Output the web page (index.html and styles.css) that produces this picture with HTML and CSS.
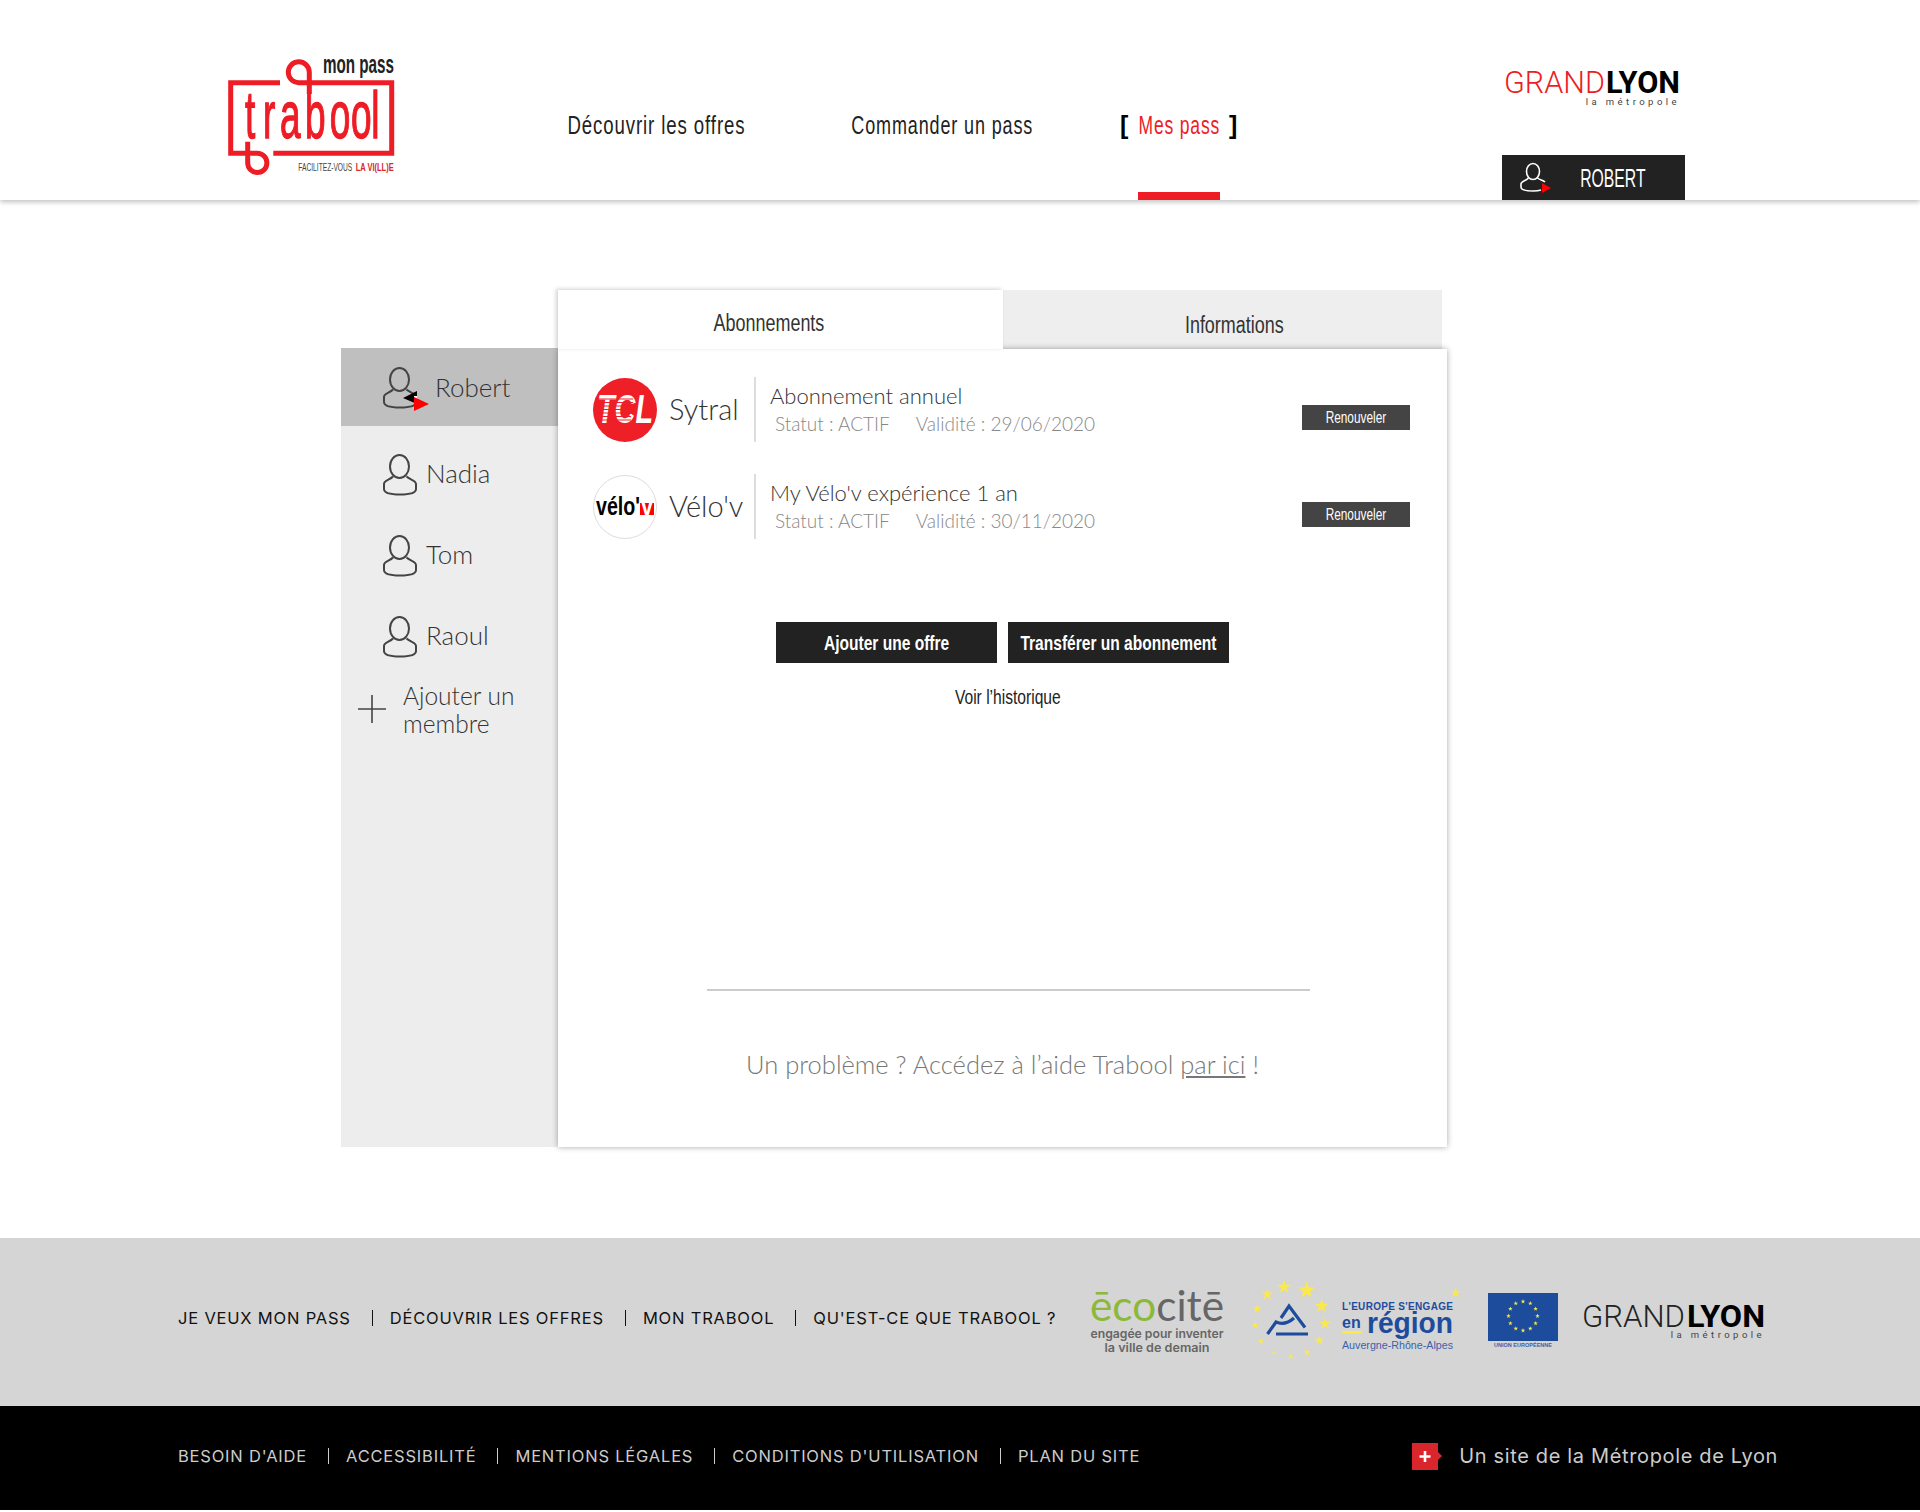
FILE: index.html
```html
<!DOCTYPE html>
<html lang="fr">
	<head>
		<meta charset="UTF-8">
		<title>Trabool - Mes pass</title>
		<link rel="stylesheet" href="styles.css">
	</head>
	<body>

		<svg class="defs" width="0" height="0">
			<defs>
				<polygon id="star" points="0,-1 .225,-.31 .95,-.31 .36,.12 .59,.81 0,.38 -.59,.81 -.36,.12 -.95,-.31 -.225,-.31"/>
				<g id="person" fill="none" stroke="#444" stroke-width="2">
					<ellipse cx="17.5" cy="12.5" rx="9.5" ry="11.5"/>
					<path d="M11 22.5 C8 26 2 26 2 30 V35 C2 39 10 40.5 18 40.5 C26 40.5 34 39 34 35 V30 C34 26 28 26 24.5 22.5"/>
				</g>
			</defs>
		</svg>

		<!--header-->
		<header class="top">
			<svg class="logo" width="180" height="130" viewBox="0 0 180 130">
				<g fill="none" stroke="#ee1c25" stroke-width="5">
					<path d="M60 32.7 H10.7 V103.3 H37.3 A9.6 9.6 0 1 1 27.7 113 V91.7"/>
					<path d="M53.3 103.3 H171.7 V32.7 H80 A10.5 10.5 0 1 1 89.3 22 V44"/>
				</g>
				<text class="logo-word" transform="scale(.56 1)" x="44.600 76.800 107 152 196 234 270" y="88">trabool</text>
				<text class="logo-pass" x="103" y="23" textLength="71" lengthAdjust="spacingAndGlyphs">mon pass</text>
				<text class="logo-sub" x="78.300" y="121" textLength="54" lengthAdjust="spacingAndGlyphs">FACILITEZ-VOUS</text>
				<text class="logo-sub logo-sub-red" x="135.700" y="121" textLength="38" lengthAdjust="spacingAndGlyphs">LA VI(LL)E</text>
			</svg>
			<nav class="nav">
				<a href="#" class="nav-item nav-w1"><span class="cond cond-nav">Découvrir les offres</span></a>
				<a href="#" class="nav-item nav-w2"><span class="cond cond-nav2">Commander un pass</span></a>
				<a href="#" class="nav-item nav-on">
					<span class="br">[</span>
					<span class="nav-label"><span class="cond cond-on">Mes pass</span></span>
					<span class="br">]</span>
				</a>
			</nav>
			<div class="top-right">
				<svg class="gl" width="183" height="42" viewBox="0 0 183 42">
					<text class="gl-light gl-red" x="2" y="27" textLength="101" lengthAdjust="spacingAndGlyphs">GRAND</text>
					<text class="gl-bold" x="104" y="27" textLength="74" lengthAdjust="spacingAndGlyphs">LYON</text>
					<text class="gl-sub" x="178" y="39" text-anchor="end">la métropole</text>
				</svg>
				<a href="#" class="me">
					<svg width="36" height="32" viewBox="0 0 36 32">
						<g fill="none" stroke="#fff" stroke-width="1.6">
							<ellipse cx="13" cy="9.500" rx="6.500" ry="8"/>
							<path d="M8.500 16 C6 19 1 19 1 22 V25 C1 28 7 29 13 29 C16 29 19 28.700 21 28 M25 20 C23 18 20 18 17.500 16"/>
						</g>
						<polygon points="22,21 31,26 22,31" fill="#f00"/>
					</svg>
					<span class="me-name"><span class="cond cond-me">ROBERT</span></span>
				</a>
			</div>
		</header>

		<main class="main">
			<!--membres-->
			<aside class="side">
				<a href="#" class="member member-on">
					<svg class="person" width="48" height="44" viewBox="0 0 48 44">
						<use href="#person"/>
						<polygon points="21,31 35,24 35,37" fill="#000"/>
						<rect x="32" y="29" width="3" height="10" fill="#fff"/>
						<polygon points="32,30 47,37 32,44" fill="#f00"/>
					</svg>
					<span>Robert</span>
				</a>
				<a href="#" class="member">
					<svg class="person" width="36" height="42" viewBox="0 0 36 42"><use href="#person"/></svg>
					<span>Nadia</span>
				</a>
				<a href="#" class="member">
					<svg class="person" width="36" height="42" viewBox="0 0 36 42"><use href="#person"/></svg>
					<span>Tom</span>
				</a>
				<a href="#" class="member">
					<svg class="person" width="36" height="42" viewBox="0 0 36 42"><use href="#person"/></svg>
					<span>Raoul</span>
				</a>
				<a href="#" class="add">
					<svg width="28" height="28" viewBox="0 0 28 28"><path d="M0 14 H28 M14 0 V28" stroke="#444" stroke-width="1.6" fill="none"/></svg>
					<span>Ajouter un<br>membre</span>
				</a>
			</aside>

			<section class="card">
				<div class="tabs">
					<a href="#" class="tab tab-on"><span class="cond cond-tab">Abonnements</span></a>
					<a href="#" class="tab"><span class="cond cond-tab">Informations</span></a>
				</div>
				<div class="panel">
					<div class="row">
						<svg class="badge" width="64" height="64" viewBox="0 0 64 64">
							<circle cx="32" cy="32" r="32" fill="#ee1f27"/>
							<text class="tcl" x="4" y="45" textLength="56" lengthAdjust="spacingAndGlyphs">TCL</text>
							<path d="M2 21 H40 M2 24.500 H40 M2 28 H40 M2 31.500 H40 M2 35 H40 M2 38.500 H38 M2 42 H38" stroke="#ee1f27" stroke-width="1.200"/>
						</svg>
						<div class="brand">Sytral</div>
						<div class="info">
							<div class="info-title">Abonnement annuel</div>
							<div class="info-meta"><span>Statut : ACTIF</span><span>Validité : 29/06/2020</span></div>
						</div>
						<a href="#" class="renew"><span class="cond cond-renew">Renouveler</span></a>
					</div>
					<div class="row">
						<svg class="badge" width="64" height="64" viewBox="0 0 64 64">
							<circle cx="32" cy="32" r="31.500" fill="#fff" stroke="#ddd"/>
							<text class="velo" x="3" y="40" textLength="44" lengthAdjust="spacingAndGlyphs">vélo'</text>
							<rect x="47" y="28" width="14" height="12" fill="#f00"/>
							<text class="velo velo-v" x="48" y="40" textLength="12" lengthAdjust="spacingAndGlyphs">v</text>
						</svg>
						<div class="brand">Vélo'v</div>
						<div class="info">
							<div class="info-title">My Vélo'v expérience 1 an</div>
							<div class="info-meta"><span>Statut : ACTIF</span><span>Validité : 30/11/2020</span></div>
						</div>
						<a href="#" class="renew"><span class="cond cond-renew">Renouveler</span></a>
					</div>

					<div class="actions">
						<a href="#" class="btn"><span class="cond cond-btn">Ajouter une offre</span></a>
						<a href="#" class="btn"><span class="cond cond-btn">Transférer un abonnement</span></a>
					</div>
					<a href="#" class="history"><span class="cond cond-hist">Voir l’historique</span></a>
					<div class="rule"></div>
					<p class="help">Un problème ? Accédez à l’aide Trabool <a href="#">par ici</a> !</p>
				</div>
			</section>
		</main>

		<!--footer-->
		<footer>
			<div class="foot-grey">
				<ul class="foot-links foot-links-main">
					<li>JE VEUX MON PASS</li>
					<li>DÉCOUVRIR LES OFFRES</li>
					<li>MON TRABOOL</li>
					<li>QU'EST-CE QUE TRABOOL ?</li>
				</ul>
				<svg class="eco" width="140" height="80" viewBox="0 0 140 80">
					<text class="eco-word" x="2" y="40" textLength="134" lengthAdjust="spacingAndGlyphs"><tspan class="eco-green">ēco</tspan><tspan class="eco-grey">citē</tspan></text>
					<text class="eco-sub" x="69" y="57" text-anchor="middle" textLength="133" lengthAdjust="spacingAndGlyphs">engagée pour inventer</text>
					<text class="eco-sub" x="69" y="71" text-anchor="middle" textLength="105" lengthAdjust="spacingAndGlyphs">la ville de demain</text>
				</svg>
				<svg class="region" width="215" height="90" viewBox="0 0 215 90">
					<g fill="#fbe94a">
						<use href="#star" transform="translate(34 11) scale(7.300)"/>
						<use href="#star" transform="translate(56.700 14.300) scale(9)"/>
						<use href="#star" transform="translate(17.300 18.300) scale(6)"/>
						<use href="#star" transform="translate(71.700 30) scale(7.300)"/>
						<use href="#star" transform="translate(7.300 32.700) scale(5)"/>
						<use href="#star" transform="translate(75 47.700) scale(6)"/>
						<use href="#star" transform="translate(5.300 49.300) scale(3.700)"/>
						<use href="#star" transform="translate(69.300 64.300) scale(5)"/>
						<use href="#star" transform="translate(11 65.300) scale(3)"/>
						<use href="#star" transform="translate(57 76.300) scale(4)"/>
						<use href="#star" transform="translate(24 76.700) scale(2)"/>
						<use href="#star" transform="translate(40.700 80.700) scale(3)"/>
						<use href="#star" transform="translate(205.700 16.700) scale(5.300)"/>
						<rect x="92" y="55" width="20" height="2.500"/>
					</g>
					<path d="M17.500 58 L26 46 Q35 50 44 42 M31 42 L39 30 L55 51.500 M26 58 H58" fill="none" stroke="#1d4c9e" stroke-width="3.200"/>
					<text class="reg-top" x="92" y="34" textLength="111" lengthAdjust="spacing">L'EUROPE S'ENGAGE</text>
					<text class="reg-en" x="92" y="52">en</text>
					<text class="reg-big" x="117" y="57" textLength="86" lengthAdjust="spacingAndGlyphs">région</text>
					<text class="reg-low" x="92" y="73" textLength="111" lengthAdjust="spacingAndGlyphs">Auvergne-Rhône-Alpes</text>
				</svg>
				<svg class="eu" width="72" height="60" viewBox="0 0 72 60">
					<rect x="1" y="1" width="70" height="48" fill="#1e4c9c"/>
					<g fill="#fbe94a">
						<use href="#star" transform="translate(36 9.500) scale(2.400)"/>
						<use href="#star" transform="translate(43.300 11.400) scale(2.400)"/>
						<use href="#star" transform="translate(48.600 16.800) scale(2.400)"/>
						<use href="#star" transform="translate(50.500 24) scale(2.400)"/>
						<use href="#star" transform="translate(48.600 31.300) scale(2.400)"/>
						<use href="#star" transform="translate(43.300 36.600) scale(2.400)"/>
						<use href="#star" transform="translate(36 38.500) scale(2.400)"/>
						<use href="#star" transform="translate(28.800 36.600) scale(2.400)"/>
						<use href="#star" transform="translate(23.400 31.300) scale(2.400)"/>
						<use href="#star" transform="translate(21.500 24) scale(2.400)"/>
						<use href="#star" transform="translate(23.400 16.800) scale(2.400)"/>
						<use href="#star" transform="translate(28.800 11.400) scale(2.400)"/>
					</g>
					<text class="eu-txt" x="36" y="55" text-anchor="middle" textLength="58" lengthAdjust="spacingAndGlyphs">UNION EUROPÉENNE</text>
				</svg>
				<svg class="gl gl-foot" width="190" height="42" viewBox="0 0 190 42">
					<text class="gl-light" x="1" y="25" textLength="103" lengthAdjust="spacingAndGlyphs">GRAND</text>
					<text class="gl-bold" x="106" y="25" textLength="78" lengthAdjust="spacingAndGlyphs">LYON</text>
					<text class="gl-sub" x="184" y="36" text-anchor="end">la métropole</text>
				</svg>
			</div>
			<div class="foot-black">
				<ul class="foot-links">
					<li>BESOIN D'AIDE</li>
					<li>ACCESSIBILITÉ</li>
					<li>MENTIONS LÉGALES</li>
					<li>CONDITIONS D'UTILISATION</li>
					<li>PLAN DU SITE</li>
				</ul>
				<div class="site">
					<svg width="30" height="27" viewBox="0 0 30 27">
						<path d="M0 0 H26 V9 L30 13 L26 17 V27 H0 Z" fill="#d8262c"/>
						<path d="M13 8 V19 M7.500 13.500 H18.500" stroke="#fff" stroke-width="2.600"/>
					</svg>
					<span>Un site de la Métropole de Lyon</span>
				</div>
			</div>
		</footer>
	</body>
</html>
```

FILE: styles.css
```css
*{
	margin:0;
	padding:0;
	list-style: none;
	box-sizing: border-box;
}
body{
	width:1920px;
	background:#fff;
	color:#333;
	font-family:"Lato","Liberation Sans",sans-serif;
	font-weight:300;
}
a{
	color:inherit;
	text-decoration:none;
}
svg{
	display:block;
	flex:none;
}
.defs{
	position:absolute;
}

/* no condensed font here, so squeeze the sans */
.cond{
	display:inline-block;
	flex:none;
	white-space:nowrap;
	font-family:"Liberation Sans",sans-serif;
	font-weight:400;
}
.cond-nav{
	transform:scaleX(.745);
}
.cond-nav2{
	transform:scaleX(.72);
}
.cond-on{
	transform:scaleX(.7);
}
.cond-me{
	transform:scaleX(.63);
}
.cond-tab{
	transform:scaleX(.78);
}
.cond-renew{
	transform:scaleX(.74);
}
.cond-btn{
	font-weight:700;
	transform:scaleX(.74);
}
.cond-hist{
	transform:scaleX(.78);
}

/* header */
.top{
	display:flex;
	height:200px;
	padding-left:220px;
	background:#fff;
	box-shadow:0 2px 5px rgba(0,0,0,.25);
	position:relative;
}
.logo{
	margin-top:50px;
}
.logo-word{
	font:400 66px "Liberation Sans",sans-serif;
	fill:#ee1c25;
	stroke:#ee1c25;
	stroke-width:1.4;
}
.logo-pass{
	font:700 25px "Liberation Sans",sans-serif;
	fill:#222;
}
.logo-sub{
	font:400 10.500px "Liberation Sans",sans-serif;
	fill:#444;
}
.logo-sub-red{
	font-weight:700;
	fill:#d8262c;
}
.nav{
	display:flex;
	margin-left:168px;
	font-size:25px;
	letter-spacing:1.2px;
	color:#222;
}
.nav-item{
	display:flex;
	justify-content:center;
	height:200px;
	padding-top:111px;
}
.nav-w1{
	width:177px;
	margin-right:107px;
}
.nav-w2{
	width:181px;
	margin-right:87px;
}
.br{
	width:8px;
	font-family:"Liberation Sans",sans-serif;
	font-weight:700;
	color:#000;
}
.nav-label{
	display:flex;
	justify-content:center;
	width:82px;
	height:89px;
	margin:0 9px 0 10px;
	border-bottom:8px solid #ee1c25;
	color:#ee1c25;
}
.top-right{
	margin-left:auto;
	margin-right:235px;
	width:183px;
}
.gl{
	margin-top:66px;
}
.gl-light{
	font:300 32px "Roboto",sans-serif;
	fill:#222;
}
.gl-red{
	fill:#ee1c25;
}
.gl-bold{
	font:700 32px "Roboto",sans-serif;
	fill:#000;
}
.gl-sub{
	font:400 9.500px "Roboto",sans-serif;
	letter-spacing:3.450px;
	fill:#444;
}
.me{
	display:flex;
	align-items:center;
	height:45px;
	margin-top:47px;
	padding:1px 0 0 18px;
	background:#222;
	color:#fff;
	font-size:25px;
}
.me-name{
	display:flex;
	justify-content:center;
	width:65px;
	margin-left:24px;
}

/* main */
.main{
	display:flex;
	padding:90px 0 91px 341px;
}
.side{
	width:217px;
	height:799px;
	margin-top:58px;
	background:#ededed;
	font-size:26px;
}
.member{
	display:flex;
	align-items:center;
	height:81px;
	padding-left:41px;
}
.member span{
	margin:-4px 0 0 8px;
}
.member-on{
	height:78px;
	margin-bottom:8px;
	background:#bfbfbf;
}
.member-on .person{
	margin-top:3px;
}
.member-on span{
	margin:0 0 0 5px;
}
.add{
	display:flex;
	align-items:center;
	margin-top:5px;
	padding-left:17px;
	font-size:24.500px;
	line-height:28px;
}
.add svg{
	margin-top:-2px;
}
.add span{
	margin-left:17px;
}
.card{
	display:flex;
	flex-direction:column;
	width:889px;
	height:857px;
}
.tabs{
	display:flex;
	height:59px;
	font-size:23px;
	color:#333;
}
.tab{
	display:flex;
	justify-content:center;
	width:439px;
	padding:22px 0 0 24px;
	background:#eee;
}
.tab-on{
	width:445px;
	background:#fff;
	padding:20px 24px 0 0;
	position:relative;
	z-index:1;
	box-shadow:-2px -1px 4px rgba(0,0,0,.18);
}
.panel{
	flex:1;
	background:#fff;
	box-shadow:0 0 6px rgba(0,0,0,.35);
	padding:28px 37px 0 35px;
}
.row{
	display:flex;
	height:65px;
	margin-bottom:32px;
}
.badge{
	margin-top:1px;
}
.tcl{
	font:italic 700 40px "Liberation Sans",sans-serif;
	fill:#fff;
}
.velo{
	font:700 25px "Liberation Sans",sans-serif;
	fill:#000;
}
.velo-v{
	fill:#fff;
}
.brand{
	width:97px;
	padding-left:12px;
	font-size:29px;
	line-height:63px;
	white-space:nowrap;
}
.info{
	flex:1;
	border-left:2px solid #ddd;
	padding-left:14px;
}
.info-title{
	font-size:22px;
	line-height:24px;
	margin-top:7px;
}
.info-meta{
	display:flex;
	gap:26px;
	margin-top:3px;
	padding-left:5px;
	font-size:19px;
	line-height:26px;
	color:#888;
}
.renew{
	display:flex;
	justify-content:center;
	width:108px;
	height:25px;
	margin-top:28px;
	background:#444;
	color:#fff;
	font-size:16px;
	line-height:25px;
}
.actions{
	display:flex;
	justify-content:center;
	gap:11px;
	margin-top:83px;
	margin-left:2px;
}
.btn{
	display:flex;
	justify-content:center;
	width:221px;
	height:41px;
	background:#222;
	color:#fff;
	font-size:21px;
	line-height:41px;
}
.history{
	display:flex;
	justify-content:center;
	margin-top:20px;
	margin-left:12px;
	font-size:20px;
	line-height:28px;
	color:#222;
}
.rule{
	width:603px;
	height:2px;
	margin:278px 0 0 114px;
	background:#ccc;
}
.help{
	margin-top:58px;
	margin-left:2px;
	text-align:center;
	font-size:25.500px;
	line-height:30px;
	color:#777;
}
.help a{
	text-decoration:underline;
}

/* footer */
.foot-links{
	display:flex;
	align-items:center;
	font-family:"Inter","Liberation Sans",sans-serif;
	font-weight:400;
	font-size:16.500px;
	line-height:16px;
	letter-spacing:.8px;
	white-space:nowrap;
}
.foot-links li + li{
	margin-left:21px;
	padding-left:17px;
	border-left:1px solid currentColor;
}
.foot-links-main{
	width:885px;
	margin-top:-8px;
}
.foot-grey{
	display:flex;
	align-items:center;
	height:168px;
	padding-left:178px;
	background:#d5d5d5;
	color:#111;
}
.eco{
	margin-left:25px;
	margin-top:-2px;
}
.eco-word{
	font:400 42px "Lato",sans-serif;
}
.eco-green{
	fill:#8cb93a;
}
.eco-grey{
	fill:#666;
}
.eco-sub{
	font:600 12px "Inter",sans-serif;
	fill:#666;
}
.region{
	margin-left:22px;
	margin-top:-2px;
}
.reg-top{
	font:700 10px "Liberation Sans",sans-serif;
	fill:#1d4c9e;
}
.reg-en{
	font:700 16px "Liberation Sans",sans-serif;
	fill:#1d4c9e;
}
.reg-big{
	font:700 30px "Liberation Sans",sans-serif;
	fill:#1d4c9e;
}
.reg-low{
	font:400 11px "Liberation Sans",sans-serif;
	fill:#3a62ac;
}
.eu{
	margin-left:22px;
}
.eu-txt{
	font:700 5.500px "Liberation Sans",sans-serif;
	fill:#3a62ac;
}
.gl-foot{
	margin-left:22px;
	margin-top:2px;
}
.foot-black{
	display:flex;
	align-items:center;
	justify-content:space-between;
	height:104px;
	padding:0 142px 4px 178px;
	background:#000;
	color:#ccc;
}
.site{
	display:flex;
	align-items:center;
	gap:17px;
	font:400 20px "Inter","Liberation Sans",sans-serif;
	letter-spacing:.65px;
}
```
